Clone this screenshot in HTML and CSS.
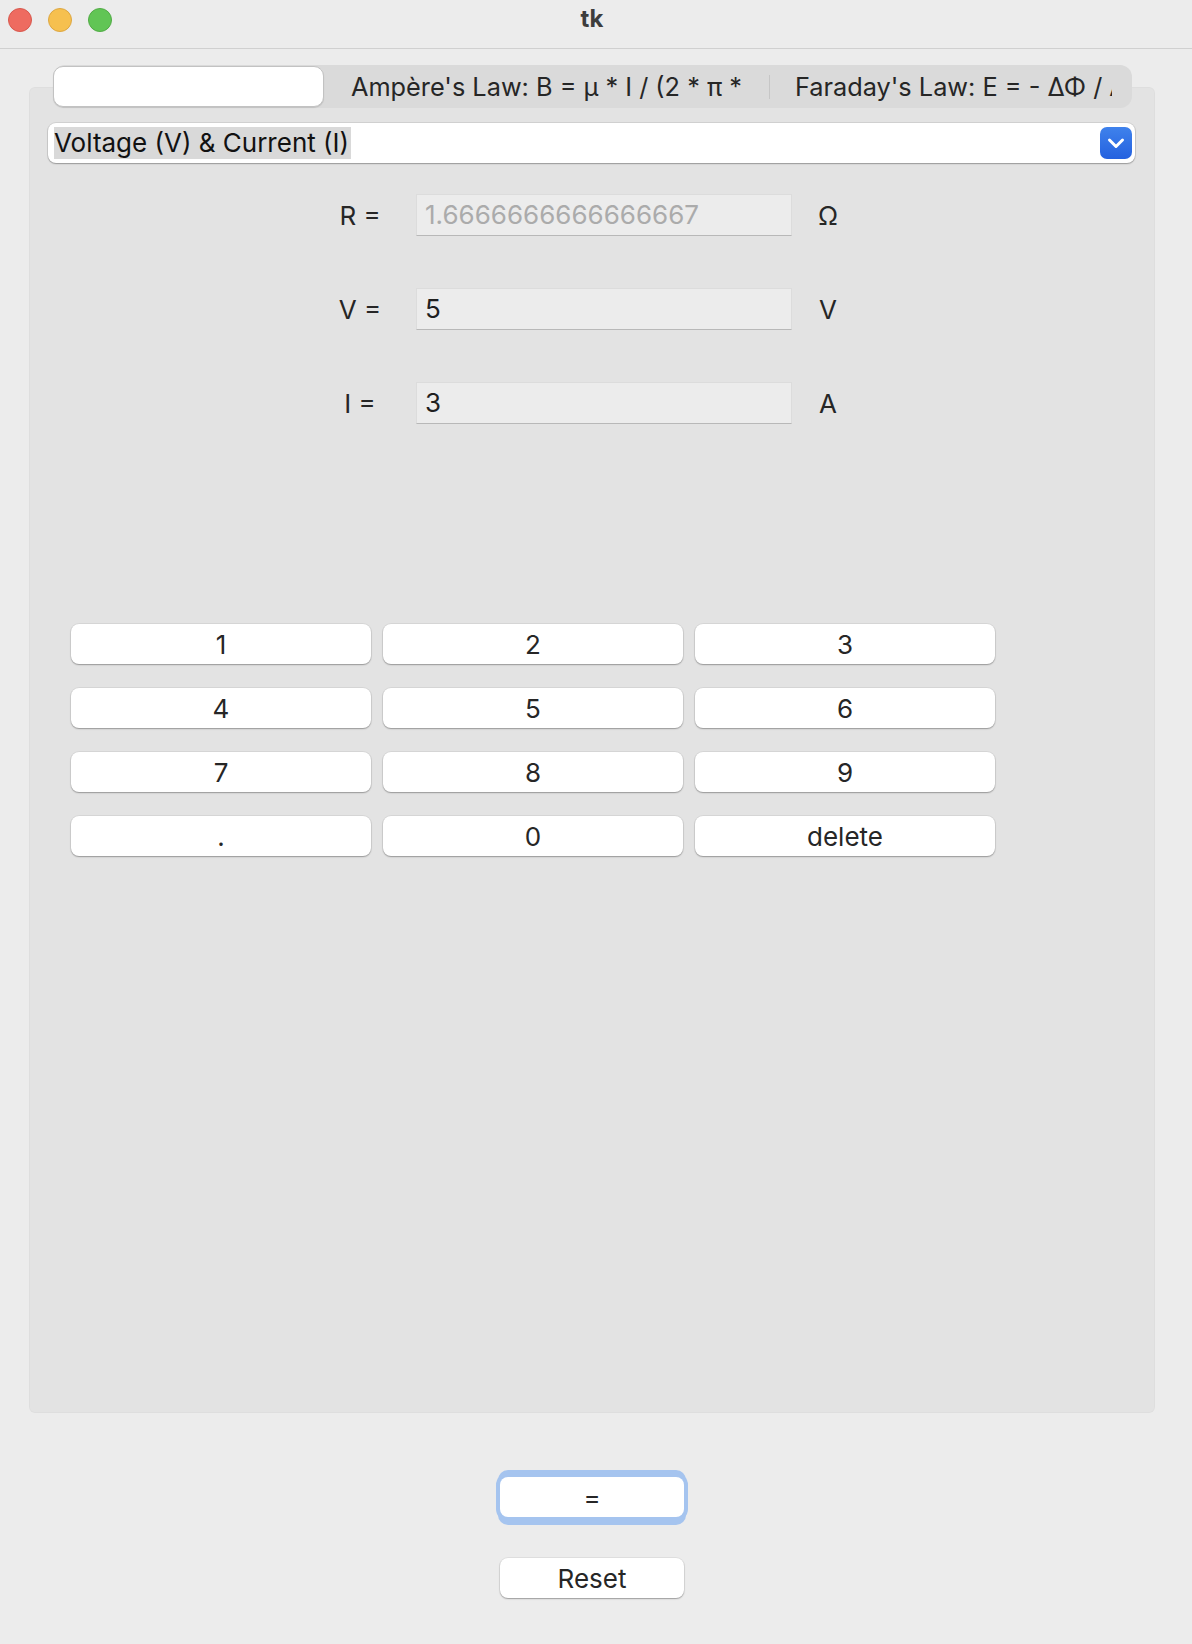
FILE: index.html
```html
<!DOCTYPE html>
<html lang="en">
<head>
<meta charset="utf-8">
<title>tk</title>
<link rel="stylesheet" href="styles.css">
</head>
<body>
<div class="window">
  <header class="titlebar">
    <div class="lights">
      <span class="light red"></span>
      <span class="light yellow"></span>
      <span class="light green"></span>
    </div>
    <div class="title">tk</div>
    <div></div>
  </header>
  <main class="content">
    <div class="notebook">
      <div class="tabs">
        <div class="tab tab-active"></div>
        <div class="tab tab-ampere">Ampère's Law: B = μ * I / (2 * π *</div>
        <div class="tab-sep"></div>
        <div class="tab tab-faraday">Faraday's Law: E = - ΔΦ / Δt</div>
      </div>
      <div class="panel">
        <div class="combo">
          <span class="combo-text">Voltage (V) &amp; Current (I)</span>
          <span class="combo-arrow">
            <svg width="32" height="32" viewBox="0 0 32 32"><path d="M9.5 13 L16 19.5 L22.5 13" fill="none" stroke="#ffffff" stroke-width="3" stroke-linecap="round" stroke-linejoin="round"/></svg>
          </span>
        </div>
        <div class="fields">
          <div class="field-row">
            <span class="label">R =</span>
            <div class="entry entry-disabled">1.6666666666666667</div>
            <span class="unit">Ω</span>
          </div>
          <div class="field-row">
            <span class="label">V =</span>
            <div class="entry">5</div>
            <span class="unit">V</span>
          </div>
          <div class="field-row">
            <span class="label">I =</span>
            <div class="entry">3</div>
            <span class="unit">A</span>
          </div>
        </div>
        <div class="keypad">
          <button class="btn">1</button>
          <button class="btn">2</button>
          <button class="btn">3</button>
          <button class="btn">4</button>
          <button class="btn">5</button>
          <button class="btn">6</button>
          <button class="btn">7</button>
          <button class="btn">8</button>
          <button class="btn">9</button>
          <button class="btn">.</button>
          <button class="btn">0</button>
          <button class="btn">delete</button>
        </div>
      </div>
    </div>
    <div class="actions">
      <button class="btn btn-action btn-focus">=</button>
      <button class="btn btn-action">Reset</button>
    </div>
  </main>
</div>
</body>
</html>
```

FILE: styles.css
```css
html, body {
  margin: 0;
  padding: 0;
}

body {
  background: #ececec;
  font-family: "Inter", "Liberation Sans", sans-serif;
  color: #262626;
}

.window {
  width: 1192px;
  height: 1644px;
  background: #ececec;
  overflow: hidden;
}

.titlebar {
  box-sizing: border-box;
  height: 49px;
  border-bottom: 1px solid #d0d0d0;
  display: grid;
  grid-template-columns: 1fr auto 1fr;
  padding-right: 8px;
}

.lights {
  display: flex;
  gap: 16px;
  padding: 8px 0 0 8px;
}

.light {
  width: 24px;
  height: 24px;
  border-radius: 50%;
  box-sizing: border-box;
}

.red { background: #ee6b60; border: 1px solid #d8584d; }
.yellow { background: #f6c04f; border: 1px solid #dda742; }
.green { background: #61c555; border: 1px solid #51ab45; }

.title {
  font-weight: 700;
  font-size: 24px;
  color: #3d3d3d;
  padding-top: 5px;
  line-height: 28px;
}

.content {
  display: flex;
  flex-direction: column;
  margin: 0 37px 0 29px;
}

.notebook {
  margin-top: 16px;
}

.tabs {
  position: relative;
  z-index: 1;
  margin: 0 23px 0 24px;
  height: 43px;
  background: #dadada;
  border-radius: 12px;
  display: flex;
  align-items: stretch;
  font-size: 25.3px;
  color: #262626;
  white-space: nowrap;
}

.tab {
  line-height: 43px;
}

.tab-active {
  width: 271px;
  margin: 1px 0;
  box-sizing: border-box;
  background: #ffffff;
  border: 1px solid #c2c2c2;
  border-radius: 10px;
  box-shadow: 0 1px 1px rgba(0, 0, 0, 0.12);
}

.tab-ampere {
  width: 445px;
  text-align: center;
}

.tab-sep {
  width: 1px;
  height: 24px;
  align-self: center;
  background: #c6c6c6;
}

.tab-faraday {
  flex: 1;
  min-width: 0;
  overflow: hidden;
  padding-left: 25px;
  margin-right: 20px;
}

.panel {
  margin-top: -21px;
  height: 1326px;
  background: #e3e3e3;
  border-radius: 6px;
  box-shadow: inset 0 0 0 1px rgba(0, 0, 0, 0.02);
  display: flex;
  flex-direction: column;
}

.combo {
  margin: 36px 20px 0 19px;
  height: 40px;
  box-sizing: border-box;
  background: #ffffff;
  border-radius: 8px;
  box-shadow: 0 0 0 1px rgba(0, 0, 0, 0.08), 0 1px 1.5px rgba(0, 0, 0, 0.28);
  display: flex;
  align-items: center;
  justify-content: space-between;
  padding: 0 3px 0 6px;
}

.combo-text {
  background: #d9d9d9;
  font-size: 26px;
  line-height: 32px;
  color: #111111;
  padding-right: 2px;
}

.combo-arrow {
  width: 32px;
  height: 32px;
  border-radius: 7px;
  background: linear-gradient(#3f82ec, #2461df);
  display: flex;
}

.fields {
  margin-top: 31px;
  display: flex;
  flex-direction: column;
  gap: 52px;
}

.field-row {
  display: flex;
  align-items: center;
  height: 42px;
  margin-left: 291px;
  font-size: 26px;
}

.label {
  width: 80px;
  text-align: center;
  color: #262626;
}

.entry {
  margin-left: 16px;
  width: 376px;
  height: 42px;
  box-sizing: border-box;
  background: #ececec;
  border: 1px solid #dcdcdc;
  border-bottom: 1.5px solid #b8b8b8;
  padding-left: 8px;
  line-height: 40px;
  color: #1f1f1f;
}

.entry-disabled {
  color: #ababab;
}

.unit {
  margin-left: 16px;
  width: 40px;
  text-align: center;
  color: #262626;
}

.keypad {
  margin: 200px 0 0 42px;
  display: grid;
  grid-template-columns: repeat(3, 300px);
  grid-auto-rows: 40px;
  column-gap: 12px;
  row-gap: 24px;
}

.btn {
  font-family: "Inter", "Liberation Sans", sans-serif;
  font-size: 26px;
  color: #262626;
  background: #ffffff;
  border: none;
  border-radius: 8px;
  padding: 0;
  height: 40px;
  box-shadow: 0 0 0 1px rgba(0, 0, 0, 0.05), 0 1px 1.5px rgba(0, 0, 0, 0.3);
}

.actions {
  display: flex;
  flex-direction: column;
  align-items: center;
  margin-top: 64px;
  gap: 41px;
}

.btn-action {
  width: 184px;
}

.btn-focus {
  box-shadow: 0 0 0 1px #a5c4ef, 0 -5px 0 2px #a5c4ef, 0 6px 0 2px #a5c4ef, 0 0 0 4px #a5c4ef;
}
```
